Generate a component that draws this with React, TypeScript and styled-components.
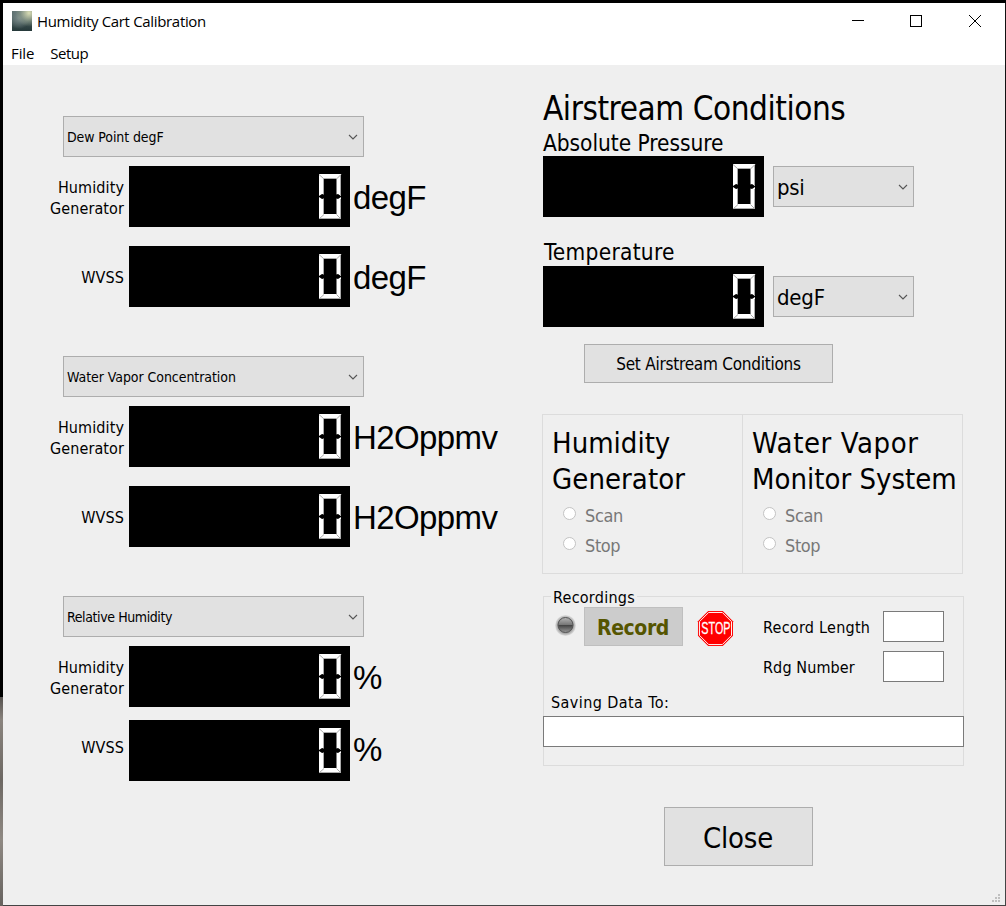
import React from "react";
import styled, { createGlobalStyle } from "styled-components";

const GlobalStyle = createGlobalStyle`
  *, *::before, *::after { box-sizing: border-box; }
  body { margin: 0; overflow: hidden; }
`;

const tahoma = `"DejaVu Sans Condensed", "DejaVu Sans", sans-serif`;
const segoe = `"Open Sans", "Noto Sans", sans-serif`;

interface TextProps {
  $size: number;
  $line?: number;
  $spacing?: number;
}

const Text = styled.span<TextProps>`
  display: block;
  white-space: pre;
  font-family: ${tahoma};
  font-stretch: condensed;
  font-size: ${(p) => p.$size}px;
  line-height: ${(p) => p.$line ?? 20}px;
  letter-spacing: ${(p) => p.$spacing ?? 0}px;
  color: #000;
`;

const Desktop = styled.div`
  width: 1006px;
  height: 906px;
  padding: 3px 1px 1px 3px;
  background: linear-gradient(#000 0 697px, #56524f 697px, #8a847e 720px, #6d6863 780px, #8f8983 840px, #66625e 906px) left / 3px 100% no-repeat,
    linear-gradient(#000 0 3px, #111 3px 680px, #444 680px) #444;
`;

const Window = styled.div`
  width: 1002px;
  height: 902px;
  display: flex;
  flex-direction: column;
  background: #fff;
`;

const TitleBar = styled.header`
  height: 36px;
  display: flex;
  align-items: center;
  padding-left: 9px;
`;

const AppIcon = styled.div`
  width: 20px;
  height: 20px;
  margin-right: 5px;
  background: radial-gradient(circle at 85% 10%, #d9dcb4 0, #8d9c8a99 35%, transparent 55%),
    radial-gradient(circle at 35% 35%, #7c8c8c, transparent 60%),
    linear-gradient(#5b6e6e, #26393a);
`;

const Title = styled(Text)`
  font-family: ${segoe};
  font-stretch: normal;
  flex: 1;
`;

const Controls = styled.svg`
  display: block;
  width: 162px;
  height: 36px;
`;

const MenuBar = styled.nav`
  height: 26px;
  display: flex;
  align-items: center;
  gap: 16px;
  padding: 1px 0 0 8px;
`;

const MenuItem = styled(Text)`
  font-family: ${segoe};
  font-stretch: normal;
`;

const Content = styled.main`
  position: relative;
  flex: 1;
  display: flex;
  background: #efefef;
`;

const LeftColumn = styled.section`
  width: 539px;
  padding-top: 51px;
`;

const RightColumn = styled.section`
  width: 422px;
  padding: 25px 0 0 1px;
  display: flex;
  flex-direction: column;
`;

const Measurement = styled.section`
  height: 240px;
`;

const Combo = styled.div<{ $width: number }>`
  width: ${(p) => p.$width}px;
  height: 41px;
  display: flex;
  align-items: center;
  justify-content: space-between;
  padding: 0 5px 0 3px;
  border: 1px solid #adadad;
  background: #e1e1e1;
`;

const MeasurementCombo = styled(Combo)`
  margin: 0 0 9px 60px;
`;

const UnitText = styled(Text)`
  padding-top: 2px;
`;

const Reading = styled.div<{ $gap: number }>`
  height: 61px;
  display: flex;
  align-items: center;
  margin-bottom: ${(p) => p.$gap}px;
`;

const ReadingLabel = styled(Text)<{ $raised: boolean }>`
  width: 121px;
  margin-right: 5px;
  padding-top: ${(p) => (p.$raised ? 0 : 2)}px;
  padding-bottom: ${(p) => (p.$raised ? 7 : 0)}px;
  text-align: right;
`;

const Unit = styled(Text)<{ $raised: boolean }>`
  font-family: "Liberation Sans", Arial, sans-serif;
  font-stretch: normal;
  padding: ${(p) => (p.$raised ? "0 0 2px 3px" : "2px 0 0 3px")};
`;

const LcdPanel = styled.div`
  width: 221px;
  height: 61px;
  flex: none;
  display: flex;
  justify-content: flex-end;
  padding: 8px 8px 0 0;
  background: #000;
`;

const AirLabel = styled(Text)<{ $indent?: number }>`
  padding: ${(p) => (p.$indent ? 0 : 1)}px 0 0 ${(p) => p.$indent ?? 0}px;
  height: 28px;
`;

const AirRow = styled.div<{ $bottom: number }>`
  display: flex;
  align-items: center;
  gap: 9px;
  margin-bottom: ${(p) => p.$bottom}px;
`;

const Button = styled.button<{ $width: number; $height: number; $left: number }>`
  width: ${(p) => p.$width}px;
  height: ${(p) => p.$height}px;
  margin: 0 0 0 ${(p) => p.$left}px;
  padding: 0;
  display: flex;
  flex: none;
  align-items: center;
  justify-content: center;
  border: 1px solid #adadad;
  background: #e1e1e1;
`;

const CloseButton = styled(Button)`
  margin-top: 41px;
  padding: 3px 1px 0 0;
`;

const RecordButton = styled(Button)`
  padding: 2px 1px 0 0;
  border-color: #bfbfbf;
  background: #ccc;
`;

const RecordText = styled(Text)`
  font-weight: bold;
  color: #555500;
`;

const Systems = styled.div`
  display: flex;
  flex: none;
  width: 421px;
  height: 160px;
  margin: 31px 0 0 -1px;
  border: 1px solid #dcdcdc;
`;

const System = styled.div`
  width: 199px;
  padding: 10px 0 0 9px;
  & + & { border-left: 1px solid #dcdcdc; width: 220px; }
`;

const RadioGroup = styled.div`
  padding-top: 3px;
`;

const RadioRow = styled.label`
  display: flex;
  height: 30px;
  padding-left: 11px;
`;

const Radio = styled.span`
  width: 13px;
  height: 13px;
  margin: 7px 9px 0 0;
  border: 1px solid #c3c3c3;
  border-radius: 50%;
  background: #fff;
`;

const RadioText = styled(Text)`
  padding-top: 1px;
  color: #787878;
`;

const Recordings = styled.fieldset`
  width: 421px;
  height: 180px;
  min-width: 0;
  margin: 12px 0 0;
  padding: 0;
  border: 1px solid #dcdcdc;
`;

const Legend = styled.legend`
  margin-left: 7px;
  padding: 0 2px;
  height: 20px;
`;

const RecordRow = styled.div`
  display: flex;
  height: 86px;
  padding-top: 1px;
`;

const Led = styled.svg`
  width: 22px;
  height: 22px;
  margin: 7px 0 0 10px;
`;

const StopSign = styled.svg`
  width: 36px;
  height: 36px;
  margin: 4px 0 0 14px;
  overflow: visible;
`;

const Fields = styled.div`
  margin: 4px 0 0 30px;
`;

const FieldRow = styled.div`
  display: flex;
  align-items: center;
  height: 31px;
  margin-bottom: 9px;
`;

const FieldLabel = styled(Text)`
  width: 120px;
  padding-top: 3px;
`;

const Field = styled.div`
  width: 61px;
  height: 31px;
  border: 1px solid #7a7a7a;
  background: #fff;
`;

const PathLabel = styled(Text)`
  padding-left: 7px;
`;

const PathField = styled(Field)`
  width: 421px;
  margin: 3px 0 0 -1px;
`;

const Grip = styled.svg`
  position: absolute;
  right: 5px;
  bottom: 3px;
  width: 8px;
  height: 8px;
`;

const Chevron = () => (
  <svg width="10" height="8" viewBox="0 0 10 8" fill="none" stroke="#555" strokeWidth="1.1">
    <path d="M1 2l4 4 4-4" />
  </svg>
);

const Lcd = () => (
  <LcdPanel>
    <svg width="23" height="46" viewBox="0 0 23 46">
      <path fill="#fff" d="M0 0H22V22L19 20L17.500 20.500V5H5V20.500L3 20L0 22ZM0 23L3 25L5 24.500V40H17.500V24.500L19 25L22 23V45H0Z" />
      <path fill="none" stroke="#aaa" d="M0 0.500L5 5M22 0.500L17.500 5M0 45L5 40.500M22 45L17.500 40.500M4.500 4.500H17.500M21.500 1V21M21.500 25V45M0 44.500H22M4.500 5V20M4.500 25V40" />
    </svg>
  </LcdPanel>
);

interface MeasurementBlockProps {
  name: string;
  nameSpacing: number;
  unit: string;
  gap: number;
  raiseLast?: boolean;
}

const MeasurementBlock = ({ name, nameSpacing, unit, gap, raiseLast = false }: MeasurementBlockProps) => (
  <Measurement>
    <MeasurementCombo $width={301}>
      <Text $size={14} $spacing={nameSpacing}>{name}</Text>
      <Chevron />
    </MeasurementCombo>
    {["Humidity\nGenerator", "WVSS"].map((label, i) => {
      const raised = raiseLast && i === 1;
      return (
        <Reading key={label} $gap={gap}>
          <ReadingLabel $size={16} $line={21} $spacing={0.1} $raised={raised}>{label}</ReadingLabel>
          <Lcd />
          <Unit $size={33} $line={40} $spacing={-0.6} $raised={raised}>{unit}</Unit>
        </Reading>
      );
    })}
  </Measurement>
);

interface HeadingLine {
  text: string;
  spacing: number;
}

const SystemPanel = ({ heading }: { heading: HeadingLine[] }) => (
  <System>
    {heading.map((line) => (
      <Text key={line.text} $size={29} $line={36} $spacing={line.spacing}>{line.text}</Text>
    ))}
    <RadioGroup>
      {["Scan", "Stop"].map((option) => (
        <RadioRow key={option}>
          <Radio />
          <RadioText $size={18} $line={30} $spacing={-0.4}>{option}</RadioText>
        </RadioRow>
      ))}
    </RadioGroup>
  </System>
);

export default function App() {
  return (
    <Desktop>
      <GlobalStyle />
      <Window>
        <TitleBar>
          <AppIcon />
          <Title $size={15} $spacing={-0.33}>Humidity Cart Calibration</Title>
          <Controls viewBox="0 0 162 36" fill="none" stroke="#000" shapeRendering="crispEdges">
            <path d="M9 17.500h12M67.500 12.500h11v11h-11z" />
            <path d="M126 12l12 12M138 12l-12 12" shapeRendering="auto" />
          </Controls>
        </TitleBar>
        <MenuBar>
          <MenuItem $size={15} $spacing={-0.1}>File</MenuItem>
          <MenuItem $size={15} $spacing={-0.5}>Setup</MenuItem>
        </MenuBar>
        <Content>
          <LeftColumn>
            <MeasurementBlock name="Dew Point degF" nameSpacing={-0.1} unit="degF" gap={19} />
            <MeasurementBlock name="Water Vapor Concentration" nameSpacing={-0.06} unit="H2Oppmv" gap={19} />
            <MeasurementBlock name="Relative Humidity" nameSpacing={-0.4} unit="%" gap={13} raiseLast />
          </LeftColumn>
          <RightColumn>
            <Text $size={33} $line={38} $spacing={-0.45}>Airstream Conditions</Text>
            <AirLabel $size={22.5} $line={28} $spacing={-0.05}>Absolute Pressure</AirLabel>
            <AirRow $bottom={21}>
              <Lcd />
              <Combo $width={141}>
                <UnitText $size={22} $line={28} $spacing={-0.3}>psi</UnitText>
                <Chevron />
              </Combo>
            </AirRow>
            <AirLabel $size={22.5} $line={28} $spacing={0.27} $indent={1}>Temperature</AirLabel>
            <AirRow $bottom={17}>
              <Lcd />
              <Combo $width={141}>
                <UnitText $size={22} $line={28} $spacing={-0.2}>degF</UnitText>
                <Chevron />
              </Combo>
            </AirRow>
            <Button $width={249} $height={39} $left={41}>
              <Text $size={17} $line={22} $spacing={-0.24}>Set Airstream Conditions</Text>
            </Button>
            <Systems>
              <SystemPanel heading={[{ text: "Humidity", spacing: 0 }, { text: "Generator", spacing: 0.05 }]} />
              <SystemPanel heading={[{ text: "Water Vapor", spacing: 0.6 }, { text: "Monitor System", spacing: 0 }]} />
            </Systems>
            <Recordings>
              <Legend><Text $size={16} $line={23} $spacing={0.25}>Recordings</Text></Legend>
              <RecordRow>
                <Led viewBox="0 0 22 22">
                  <defs>
                    <radialGradient id="rim"><stop offset=".7" stopColor="#999" /><stop offset="1" stopColor="#e2e2e2" /></radialGradient>
                    <linearGradient id="lamp" x2="0" y2="1"><stop stopColor="#b5b5b5" /><stop offset=".48" stopColor="#777" /><stop offset=".52" stopColor="#444" /><stop offset="1" stopColor="#999" /></linearGradient>
                  </defs>
                  <circle cx="11.500" cy="11.500" r="10.500" fill="url(#rim)" />
                  <circle cx="11.500" cy="11" r="7.500" fill="url(#lamp)" stroke="#555" />
                </Led>
                <RecordButton $width={99} $height={39} $left={8}>
                  <RecordText $size={21} $line={28} $spacing={-0.4}>Record</RecordText>
                </RecordButton>
                <StopSign viewBox="-1 0 37 37">
                  <path d="M10.500 0h15L36 10.500v15L25.500 36h-15L0 25.500v-15z" fill="#f00" />
                  <path d="M11 1.500h14L34.500 11v14L25 34.500H11L1.500 25V11z" fill="none" stroke="#fff" />
                  <text x="3.500" y="24" textLength="30" lengthAdjust="spacingAndGlyphs" fontFamily="Liberation Sans, sans-serif" fontSize="17" fill="#fff" stroke="#fff" strokeWidth=".3">STOP</text>
                </StopSign>
                <Fields>
                  <FieldRow><FieldLabel $size={16} $spacing={0.26}>Record Length</FieldLabel><Field /></FieldRow>
                  <FieldRow><FieldLabel $size={16} $spacing={0.12}>Rdg Number</FieldLabel><Field /></FieldRow>
                </Fields>
              </RecordRow>
              <PathLabel $size={16} $line={21} $spacing={0.42}>Saving Data To:</PathLabel>
              <PathField />
            </Recordings>
            <CloseButton $width={149} $height={59} $left={121}>
              <Text $size={29} $line={36} $spacing={-0.2}>Close</Text>
            </CloseButton>
          </RightColumn>
          <Grip viewBox="0 0 8 8" fill="#bfbfbf">
            <path d="M6 0h2v2H6zM3 3h2v2H3zM6 3h2v2H6zM0 6h2v2H0zM3 6h2v2H3zM6 6h2v2H6z" />
          </Grip>
        </Content>
      </Window>
    </Desktop>
  );
}
